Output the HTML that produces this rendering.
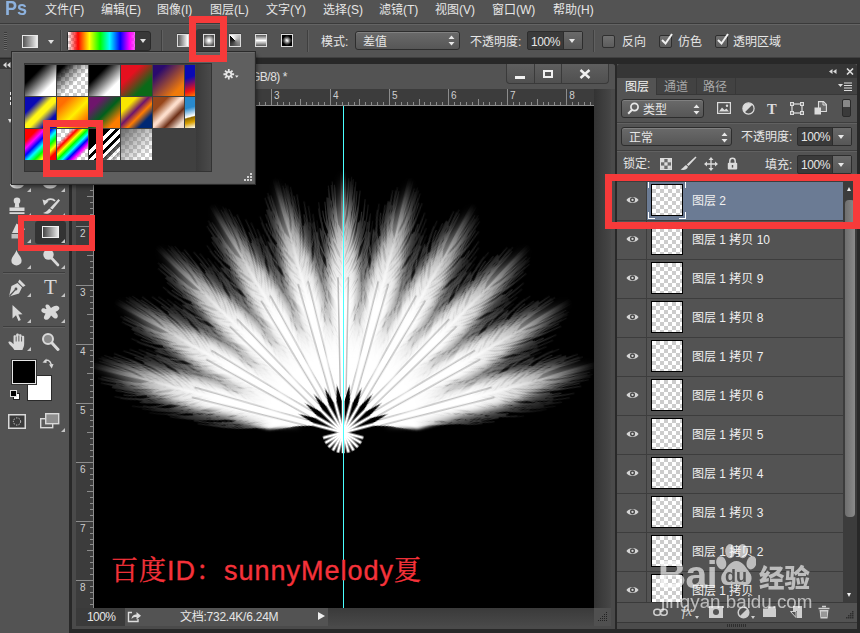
<!DOCTYPE html>
<html lang="zh-CN"><head><meta charset="utf-8"><title>Photoshop</title>
<style>
*{box-sizing:border-box;margin:0;padding:0}
html,body{width:860px;height:633px;overflow:hidden;background:#282828}
body{position:relative;font-family:"Liberation Sans","Noto Sans CJK SC",sans-serif;font-size:12px;color:#e6e6e6;line-height:1}
.a{position:absolute}
.t{position:absolute;white-space:nowrap;line-height:14px;height:14px}
.redbox{position:absolute;border:7px solid #f73a3a;z-index:50}
.dd{position:absolute;border:1px solid #2d2d2d;border-radius:3px;background:linear-gradient(#6a6a6a,#565656);box-shadow:inset 0 1px 0 #808080}
.chk{background-color:#fff;background-image:linear-gradient(45deg,#ccc 25%,transparent 25%,transparent 75%,#ccc 75%),linear-gradient(45deg,#ccc 25%,transparent 25%,transparent 75%,#ccc 75%);background-size:8px 8px;background-position:0 0,4px 4px}
.sw{position:absolute;width:32px;height:32px;overflow:hidden}
.sw i{position:absolute;left:0;top:0;right:0;bottom:0;display:block}
.row{position:absolute;left:617px;width:226px;height:39px;border-top:1px solid #3d3d3d;background:#535353}
.row .th{position:absolute;left:34px;top:2px;width:32px;height:32px;border:1px solid #000}
.row .nm{position:absolute;left:75px;top:12px;line-height:14px;white-space:nowrap;color:#f0f0f0}
.row .ey{position:absolute;left:0;top:0;width:30px;height:38px;border-right:1px solid #3d3d3d}
</style></head>
<body>
<div class="a" style="left:0;top:0;width:860px;height:24px;background:#535353;border-bottom:1px solid #3a3a3a"></div>
<div class="t" style="left:5px;top:-3px;font-size:20.5px;font-weight:bold;color:#8db2de;line-height:22px;height:22px;letter-spacing:0px;transform:scaleX(.88);transform-origin:0 0">Ps</div>
<div class="t" style="left:45px;top:3px">文件(F)</div>
<div class="t" style="left:101px;top:3px">编辑(E)</div>
<div class="t" style="left:157px;top:3px">图像(I)</div>
<div class="t" style="left:210px;top:3px">图层(L)</div>
<div class="t" style="left:266px;top:3px">文字(Y)</div>
<div class="t" style="left:323px;top:3px">选择(S)</div>
<div class="t" style="left:379px;top:3px">滤镜(T)</div>
<div class="t" style="left:435px;top:3px">视图(V)</div>
<div class="t" style="left:492px;top:3px">窗口(W)</div>
<div class="t" style="left:553px;top:3px">帮助(H)</div>
<div class="a" style="left:0;top:24px;width:860px;height:34px;background:#535353;border-top:1px solid #646464;border-bottom:1px solid #404040"></div>
<div class="a" style="left:4px;top:32px;width:3px;height:18px;background:repeating-linear-gradient(#3a3a3a 0 1px,#6a6a6a 1px 2px)"></div>
<div class="a" style="left:22px;top:35px;width:16px;height:13px;border:1px solid #e8e8e8;background:linear-gradient(90deg,#555,#eee)"></div>
<div class="a" style="left:48px;top:40px;border:3px solid transparent;border-top:4px solid #e0e0e0;border-bottom:0"></div>
<div class="a" style="left:60px;top:30px;width:1px;height:22px;background:#3f3f3f;border-right:1px solid #606060;width:2px"></div>
<div class="a" style="left:67px;top:31px;width:84px;height:20px;border:1px solid #2a2a2a;border-radius:3px;background:#383838"></div>
<div class="a chk" style="left:68px;top:32px;width:67px;height:18px;background-size:6px 6px;background-position:0 0,3px 3px"></div>
<div class="a" style="left:68px;top:32px;width:67px;height:18px;background:linear-gradient(90deg,rgba(255,0,0,0) 0%,#f00 15%,#ff0 32%,#0f0 48%,#0ff 62%,#00f 78%,#f0f 92%,rgba(255,0,255,.6) 100%)"></div>
<div class="a" style="left:140px;top:39px;border:3px solid transparent;border-top:4px solid #e0e0e0;border-bottom:0"></div>
<div class="a" style="left:161px;top:30px;width:2px;height:22px;background:#3f3f3f;border-right:1px solid #606060"></div>
<div class="a" style="left:196px;top:29px;width:25px;height:24px;background:#383838;border-radius:3px"></div>
<div class="a" style="left:177px;top:34px;width:12px;height:13px;border:1px solid #dcdcdc;box-shadow:0 -1px 0 #3c3c3c;background:linear-gradient(90deg,#555,#fff)"></div>
<div class="a" style="left:203px;top:34px;width:12px;height:13px;border:1px solid #dcdcdc;box-shadow:0 -1px 0 #3c3c3c;background:radial-gradient(circle,#fff 10%,#555 75%)"></div>
<div class="a" style="left:229px;top:34px;width:12px;height:13px;border:1px solid #dcdcdc;box-shadow:0 -1px 0 #3c3c3c;background:conic-gradient(from 315deg at 50% 50%,#fff,#000)"></div>
<div class="a" style="left:255px;top:34px;width:12px;height:13px;border:1px solid #dcdcdc;box-shadow:0 -1px 0 #3c3c3c;background:linear-gradient(#555,#fff 50%,#555)"></div>
<div class="a" style="left:281px;top:34px;width:12px;height:13px;border:1px solid #dcdcdc;box-shadow:0 -1px 0 #3c3c3c;background:linear-gradient(45deg,#000 20%,transparent 50%,#000 80%),linear-gradient(135deg,#000 20%,#fff 45%,#fff 55%,#000 80%)"></div>
<div class="a" style="left:307px;top:30px;width:2px;height:22px;background:#3f3f3f;border-right:1px solid #606060"></div>
<div class="t" style="left:321px;top:35px">模式:</div>
<div class="dd" style="left:355px;top:31px;width:105px;height:19px"></div>
<div class="t" style="left:363px;top:35px">差值</div>
<svg class="a" style="left:448px;top:35px" width="7" height="11" viewBox="0 0 7 11"><path d="M0.5 4 L3.5 0.5 L6.5 4Z M0.5 7 L3.5 10.5 L6.5 7Z" fill="#e8e8e8"/></svg>
<div class="t" style="left:470px;top:35px">不透明度:</div>
<div class="a" style="left:527px;top:31px;width:56px;height:19px;border:1px solid #2d2d2d;border-radius:2px;background:#3a3a3a"></div>
<div class="a" style="left:563px;top:32px;width:19px;height:17px;background:linear-gradient(#6a6a6a,#565656);border-left:1px solid #2d2d2d"></div>
<div class="a" style="left:569px;top:39px;border:3.5px solid transparent;border-top:4px solid #e8e8e8;border-bottom:0"></div>
<div class="t" style="left:531px;top:35px;letter-spacing:-0.4px">100%</div>
<div class="a" style="left:593px;top:30px;width:2px;height:22px;background:#3f3f3f;border-right:1px solid #606060"></div>
<div class="a" style="left:602px;top:35px;width:13px;height:13px;border:1px solid #2f2f2f;border-radius:2px;background:linear-gradient(#707070,#5c5c5c)"></div>
<div class="t" style="left:622px;top:35px">反向</div>
<div class="a" style="left:659px;top:35px;width:13px;height:13px;border:1px solid #2f2f2f;border-radius:2px;background:linear-gradient(#707070,#5c5c5c)"></div><svg class="a" style="left:660px;top:32px" width="14" height="14" viewBox="0 0 14 14"><path d="M2 8 L5.5 11.5 L12 2" fill="none" stroke="#f0f0f0" stroke-width="2"/></svg>
<div class="t" style="left:678px;top:35px">仿色</div>
<div class="a" style="left:715px;top:35px;width:13px;height:13px;border:1px solid #2f2f2f;border-radius:2px;background:linear-gradient(#707070,#5c5c5c)"></div><svg class="a" style="left:716px;top:32px" width="14" height="14" viewBox="0 0 14 14"><path d="M2 8 L5.5 11.5 L12 2" fill="none" stroke="#f0f0f0" stroke-width="2"/></svg>
<div class="t" style="left:733px;top:35px">透明区域</div>
<div class="a" style="left:0;top:64px;width:69px;height:569px;background:#535353"></div>
<div class="a" style="left:0;top:59px;width:69px;height:10px;background:#363636"></div>
<svg class="a" style="left:3px;top:62px" width="8" height="6" viewBox="0 0 8 6"><path d="M3.5 0V6L0 3ZM7.5 0V6L4 3Z" fill="#d8d8d8"/></svg>
<div class="a" style="left:10px;top:92px;width:1px;height:13px;background:repeating-linear-gradient(#eee 0 3px,transparent 3px 5px)"></div>
<div class="a" style="left:8px;top:119px;border:2px solid transparent;border-top:4px solid #ddd;border-bottom:0"></div>
<div class="a" style="left:35px;top:221px;width:31px;height:23px;background:#333;border-radius:3px"></div>
<div class="a" style="left:3px;top:272px;width:62px;height:1px;background:#3e3e3e;border-bottom:1px solid #606060;height:2px"></div>
<div class="a" style="left:3px;top:326px;width:62px;height:2px;background:#3e3e3e;border-bottom:1px solid #606060"></div>
<svg class="a" style="left:8px;top:184px" width="18" height="6" viewBox="0 0 18 6" preserveAspectRatio="none"><ellipse cx="9" cy="0" rx="7" ry="4.5" fill="#d9d9d9"/></svg>
<svg class="a" style="left:41px;top:184px" width="18" height="6" viewBox="0 0 18 6" preserveAspectRatio="none"><ellipse cx="9" cy="0" rx="7" ry="4.5" fill="#d9d9d9"/></svg>
<div class="a" style="left:27px;top:188px;border:2px solid transparent;border-right-color:#bbb;border-bottom-color:#bbb;border-left:0;border-top:0;width:0;height:0;border-width:0 0 4px 4px;border-style:solid;border-color:transparent transparent #c4c4c4 transparent"></div>
<div class="a" style="left:61px;top:188px;border:2px solid transparent;border-right-color:#bbb;border-bottom-color:#bbb;border-left:0;border-top:0;width:0;height:0;border-width:0 0 4px 4px;border-style:solid;border-color:transparent transparent #c4c4c4 transparent"></div>
<svg class="a" style="left:8px;top:197px" width="18" height="18" viewBox="0 0 18 18" preserveAspectRatio="none"><g fill="#d9d9d9"><circle cx="9" cy="3.8" r="3.3"/><path d="M7.3 5h3.4l0.6 5.5h-4.6z"/><path d="M1.5 10.5h15v3.5h-15z"/><rect x="1.5" y="15.2" width="15" height="1.8"/></g></svg>
<div class="a" style="left:27px;top:213px;border:2px solid transparent;border-right-color:#bbb;border-bottom-color:#bbb;border-left:0;border-top:0;width:0;height:0;border-width:0 0 4px 4px;border-style:solid;border-color:transparent transparent #c4c4c4 transparent"></div>
<svg class="a" style="left:41px;top:196px" width="20" height="20" viewBox="0 0 20 20" preserveAspectRatio="none"><g fill="none" stroke="#d9d9d9"><path d="M4 6.5C7 2 12 2.5 14 5" stroke-width="1.8"/></g><path d="M1.5 3.5L7.5 5.5L3 9.5Z" fill="#d9d9d9"/><path d="M17.5 3L19 4.5L11.5 13.5L9 12Z" fill="#d9d9d9"/><path d="M8.3 12.6L11 14.4C9 18 5 18.5 2 17C5 16.5 6.5 14.5 8.3 12.6Z" fill="#d9d9d9"/></svg>
<div class="a" style="left:61px;top:213px;border:2px solid transparent;border-right-color:#bbb;border-bottom-color:#bbb;border-left:0;border-top:0;width:0;height:0;border-width:0 0 4px 4px;border-style:solid;border-color:transparent transparent #c4c4c4 transparent"></div>
<svg class="a" style="left:7px;top:222px" width="20" height="18" viewBox="0 0 20 18" preserveAspectRatio="none"><path d="M9.5 1.5L18 7L14.5 11H5Z" fill="#d9d9d9"/><path d="M4.5 12H14.5V16.5H4.5Z" fill="#bdbdbd"/></svg>
<div class="a" style="left:27px;top:239px;border:2px solid transparent;border-right-color:#bbb;border-bottom-color:#bbb;border-left:0;border-top:0;width:0;height:0;border-width:0 0 4px 4px;border-style:solid;border-color:transparent transparent #c4c4c4 transparent"></div>
<div class="a" style="left:42px;top:226px;width:17px;height:12px;border:1px solid #f0f0f0;background:linear-gradient(90deg,#444,#e8e8e8)"></div>
<div class="a" style="left:61px;top:239px;border:2px solid transparent;border-right-color:#bbb;border-bottom-color:#bbb;border-left:0;border-top:0;width:0;height:0;border-width:0 0 4px 4px;border-style:solid;border-color:transparent transparent #c4c4c4 transparent"></div>
<svg class="a" style="left:10px;top:249px" width="13" height="17" viewBox="0 0 14 19" preserveAspectRatio="none"><path d="M7 1C8.5 6 12.5 9 12.5 13A5.5 5.5 0 0 1 1.5 13C1.5 9 5.5 6 7 1Z" fill="#d9d9d9"/></svg>
<div class="a" style="left:27px;top:265px;border:2px solid transparent;border-right-color:#bbb;border-bottom-color:#bbb;border-left:0;border-top:0;width:0;height:0;border-width:0 0 4px 4px;border-style:solid;border-color:transparent transparent #c4c4c4 transparent"></div>
<svg class="a" style="left:42px;top:248px" width="18" height="19" viewBox="0 0 18 19" preserveAspectRatio="none"><circle cx="6.5" cy="6.5" r="5.2" fill="#d9d9d9"/><path d="M9.5 10L16 17" stroke="#d9d9d9" stroke-width="2.6" stroke-linecap="round"/></svg>
<div class="a" style="left:61px;top:265px;border:2px solid transparent;border-right-color:#bbb;border-bottom-color:#bbb;border-left:0;border-top:0;width:0;height:0;border-width:0 0 4px 4px;border-style:solid;border-color:transparent transparent #c4c4c4 transparent"></div>
<svg class="a" style="left:7px;top:278px" width="20" height="20" viewBox="0 0 20 20" preserveAspectRatio="none"><path d="M12.5 1.5L18.5 7.5L16 9L11 4Z" fill="#d9d9d9"/><path d="M10.5 5L15 9.5L12 15.5L2 18.5L4.5 8Z" fill="#d9d9d9"/><path d="M2.5 18L8.5 11.5" stroke="#535353" stroke-width="1.2"/><circle cx="9" cy="11" r="1.4" fill="#535353"/></svg>
<div class="a" style="left:27px;top:293px;border:2px solid transparent;border-right-color:#bbb;border-bottom-color:#bbb;border-left:0;border-top:0;width:0;height:0;border-width:0 0 4px 4px;border-style:solid;border-color:transparent transparent #c4c4c4 transparent"></div>
<div class="t" style="left:44px;top:274px;font-family:'Liberation Serif',serif;font-size:21px;line-height:26px;height:26px;color:#d9d9d9">T</div>
<div class="a" style="left:61px;top:293px;border:2px solid transparent;border-right-color:#bbb;border-bottom-color:#bbb;border-left:0;border-top:0;width:0;height:0;border-width:0 0 4px 4px;border-style:solid;border-color:transparent transparent #c4c4c4 transparent"></div>
<svg class="a" style="left:11px;top:304px" width="12" height="18" viewBox="0 0 12 18" preserveAspectRatio="none"><path d="M1.5 1L1.5 14.5L5 11.2L7.5 17L9.8 16L7.3 10.4L11.5 10.2Z" fill="#d9d9d9"/></svg>
<div class="a" style="left:27px;top:319px;border:2px solid transparent;border-right-color:#bbb;border-bottom-color:#bbb;border-left:0;border-top:0;width:0;height:0;border-width:0 0 4px 4px;border-style:solid;border-color:transparent transparent #c4c4c4 transparent"></div>
<svg class="a" style="left:40px;top:303px" width="21" height="19" viewBox="0 0 21 19" preserveAspectRatio="none"><path d="M6.5 1.5C9 1 10 3.5 11 5C13 3 17 1.5 19 4C20.5 6.5 17 8 15.5 9C17 10.5 19 13 17 15C14.5 17 12.5 13.5 11 12.5C10 14.5 8 18 5 16.5C2.5 15 5 12 5.5 10.5C3.5 10 0.5 9 1.5 6.5C2.5 4 5.5 6 6.5 6C6 4.5 4.5 2.5 6.5 1.5Z" fill="#d9d9d9"/></svg>
<div class="a" style="left:61px;top:319px;border:2px solid transparent;border-right-color:#bbb;border-bottom-color:#bbb;border-left:0;border-top:0;width:0;height:0;border-width:0 0 4px 4px;border-style:solid;border-color:transparent transparent #c4c4c4 transparent"></div>
<svg class="a" style="left:7px;top:332px" width="21" height="20" viewBox="0 0 17 20" preserveAspectRatio="none"><path d="M6 18C4.5 15 2 13 1.2 10.8C0.8 9.5 2.5 9 3.6 10.2L5.3 12.2V4.2C5.3 2.8 7.4 2.8 7.4 4.2V2.6C7.4 1.1 9.6 1.1 9.6 2.6V3.2C9.6 1.9 11.8 1.9 11.8 3.2V4.6C11.8 3.4 13.9 3.4 13.9 4.8V12C13.9 14.5 13 16 12.5 18Z" fill="#d9d9d9"/><path d="M7.4 4.5V9.5M9.6 3.5V9.5M11.8 4.6V9.5" stroke="#535353" stroke-width=".8"/></svg>
<div class="a" style="left:27px;top:347px;border:2px solid transparent;border-right-color:#bbb;border-bottom-color:#bbb;border-left:0;border-top:0;width:0;height:0;border-width:0 0 4px 4px;border-style:solid;border-color:transparent transparent #c4c4c4 transparent"></div>
<svg class="a" style="left:41px;top:332px" width="19" height="20" viewBox="0 0 19 20" preserveAspectRatio="none"><circle cx="7" cy="7" r="5" fill="#8a8a8a" stroke="#d9d9d9" stroke-width="2"/><path d="M11 11L17 17.5" stroke="#d9d9d9" stroke-width="3" stroke-linecap="round"/></svg>
<div class="a" style="left:27px;top:375px;width:25px;height:26px;background:#fff;border:1px solid #2a2a2a"></div>
<div class="a" style="left:12px;top:360px;width:24px;height:24px;background:#000;border:1px solid #e8e8e8;box-shadow:0 0 0 1px #333"></div>
<svg class="a" style="left:42px;top:357px" width="12" height="12" viewBox="0 0 12 12" preserveAspectRatio="none"><path d="M2.5 4.5C5 2 8 3 9.5 8" fill="none" stroke="#d9d9d9" stroke-width="1.4"/><path d="M0.5 5.5L4.5 1.5L4.5 6Z" fill="#d9d9d9"/><path d="M7 7.5L11.5 7L9.8 11.5Z" fill="#d9d9d9"/></svg>
<div class="a" style="left:13px;top:393px;width:7px;height:7px;background:#fff;border:1px solid #222"></div>
<div class="a" style="left:10px;top:390px;width:7px;height:7px;background:#000;border:1px solid #ddd"></div>
<svg class="a" style="left:8px;top:414px" width="18" height="15" viewBox="0 0 18 15" preserveAspectRatio="none"><rect x="0.75" y="0.75" width="16.5" height="13.5" fill="#3a3a3a" stroke="#d9d9d9" stroke-width="1.5"/><circle cx="9" cy="7.5" r="3.6" fill="none" stroke="#d9d9d9" stroke-width="1" stroke-dasharray="1.3 1.3"/></svg>
<svg class="a" style="left:40px;top:413px" width="22" height="17" viewBox="0 0 22 17" preserveAspectRatio="none"><rect x="0.7" y="5.7" width="12" height="9" fill="#5c5c5c" stroke="#d9d9d9" stroke-width="1.4"/><rect x="5.7" y="0.7" width="13" height="10" fill="#8e8e8e" stroke="#d9d9d9" stroke-width="1.4"/></svg>
<div class="a" style="left:61px;top:428px;border:2px solid transparent;border-right-color:#bbb;border-bottom-color:#bbb;border-left:0;border-top:0;width:0;height:0;border-width:0 0 4px 4px;border-style:solid;border-color:transparent transparent #c4c4c4 transparent"></div>
<div class="a" style="left:72px;top:64px;width:543px;height:565px;background:#4a4a4a;border-radius:3px 3px 0 0"></div>
<div class="a" style="left:72px;top:64px;width:543px;height:25px;background:#535353;border-radius:3px 3px 0 0"></div>
<div class="t" style="left:251px;top:70px;color:#e0e0e0;letter-spacing:-0.5px">GB/8) *</div>
<div class="a" style="left:506px;top:64px;width:103px;height:20px;border:1px solid #3a3a3a;border-top:0;border-radius:0 0 4px 4px;background:linear-gradient(#5f5f5f,#505050)"></div>
<div class="a" style="left:534px;top:64px;width:1px;height:19px;background:#3a3a3a"></div>
<div class="a" style="left:561px;top:64px;width:1px;height:19px;background:#3a3a3a"></div>
<div class="a" style="left:515px;top:76px;width:10px;height:3px;background:#f0f0f0"></div>
<div class="a" style="left:543px;top:70px;width:10px;height:8px;border:2px solid #f0f0f0"></div>
<svg class="a" style="left:579px;top:69px" width="12" height="10" viewBox="0 0 12 10"><path d="M1.5 1 L10.5 9 M10.5 1 L1.5 9" stroke="#f0f0f0" stroke-width="2.4" fill="none"/></svg>
<div class="a" style="left:76px;top:89px;width:518px;height:17px;background:#3c3c3c"></div>
<div class="a" style="left:76px;top:106px;width:18px;height:502px;background:#3c3c3c"></div>
<svg class="a" style="left:76px;top:89px" width="518" height="17" viewBox="76 89 518 17" shape-rendering="crispEdges">
<path d="M82.5 102V106M88.5 102V106M94.5 89V106M100.5 102V106M106.5 102V106M111.5 102V106M117.5 102V106M123.5 99V106M129.5 102V106M135.5 102V106M141.5 102V106M147.5 102V106M153.5 89V106M159.5 102V106M165.5 102V106M170.5 102V106M176.5 102V106M182.5 99V106M188.5 102V106M194.5 102V106M200.5 102V106M206.5 102V106M212.5 89V106M218.5 102V106M224.5 102V106M230.5 102V106M235.5 102V106M241.5 99V106M247.5 102V106M253.5 102V106M259.5 102V106M265.5 102V106M271.5 89V106M277.5 102V106M283.5 102V106M289.5 102V106M295.5 102V106M300.5 99V106M306.5 102V106M312.5 102V106M318.5 102V106M324.5 102V106M330.5 89V106M336.5 102V106M342.5 102V106M348.5 102V106M354.5 102V106M359.5 99V106M365.5 102V106M371.5 102V106M377.5 102V106M383.5 102V106M389.5 89V106M395.5 102V106M401.5 102V106M407.5 102V106M413.5 102V106M419.5 99V106M424.5 102V106M430.5 102V106M436.5 102V106M442.5 102V106M448.5 89V106M454.5 102V106M460.5 102V106M466.5 102V106M472.5 102V106M478.5 99V106M483.5 102V106M489.5 102V106M495.5 102V106M501.5 102V106M507.5 89V106M513.5 102V106M519.5 102V106M525.5 102V106M531.5 102V106M537.5 99V106M543.5 102V106M548.5 102V106M554.5 102V106M560.5 102V106M566.5 89V106M572.5 102V106M578.5 102V106M584.5 102V106M590.5 102V106" stroke="#8c8c8c" stroke-width="1" fill="none"/>
<path d="M76 105.5H594" stroke="#8c8c8c" stroke-width="1"/>
<text x="96.7" y="99" font-size="10" fill="#cfcfcf" font-family="Liberation Sans,sans-serif" style="shape-rendering:auto">0</text>
<text x="155.8" y="99" font-size="10" fill="#cfcfcf" font-family="Liberation Sans,sans-serif" style="shape-rendering:auto">1</text>
<text x="214.8" y="99" font-size="10" fill="#cfcfcf" font-family="Liberation Sans,sans-serif" style="shape-rendering:auto">2</text>
<text x="273.9" y="99" font-size="10" fill="#cfcfcf" font-family="Liberation Sans,sans-serif" style="shape-rendering:auto">3</text>
<text x="332.9" y="99" font-size="10" fill="#cfcfcf" font-family="Liberation Sans,sans-serif" style="shape-rendering:auto">4</text>
<text x="392.0" y="99" font-size="10" fill="#cfcfcf" font-family="Liberation Sans,sans-serif" style="shape-rendering:auto">5</text>
<text x="451.1" y="99" font-size="10" fill="#cfcfcf" font-family="Liberation Sans,sans-serif" style="shape-rendering:auto">6</text>
<text x="510.1" y="99" font-size="10" fill="#cfcfcf" font-family="Liberation Sans,sans-serif" style="shape-rendering:auto">7</text>
<text x="569.2" y="99" font-size="10" fill="#cfcfcf" font-family="Liberation Sans,sans-serif" style="shape-rendering:auto">8</text>
</svg>
<svg class="a" style="left:76px;top:106px" width="18" height="502" viewBox="76 106 18 502" shape-rendering="crispEdges">
<path d="M76 107.5H94M90 113.5H94M90 119.5H94M90 125.5H94M90 131.5H94M87 137.5H94M90 143.5H94M90 149.5H94M90 155.5H94M90 161.5H94M76 166.5H94M90 172.5H94M90 178.5H94M90 184.5H94M90 190.5H94M87 196.5H94M90 202.5H94M90 208.5H94M90 214.5H94M90 220.5H94M76 226.5H94M90 231.5H94M90 237.5H94M90 243.5H94M90 249.5H94M87 255.5H94M90 261.5H94M90 267.5H94M90 273.5H94M90 279.5H94M76 285.5H94M90 290.5H94M90 296.5H94M90 302.5H94M90 308.5H94M87 314.5H94M90 320.5H94M90 326.5H94M90 332.5H94M90 338.5H94M76 344.5H94M90 350.5H94M90 355.5H94M90 361.5H94M90 367.5H94M87 373.5H94M90 379.5H94M90 385.5H94M90 391.5H94M90 397.5H94M76 403.5H94M90 409.5H94M90 415.5H94M90 420.5H94M90 426.5H94M87 432.5H94M90 438.5H94M90 444.5H94M90 450.5H94M90 456.5H94M76 462.5H94M90 468.5H94M90 474.5H94M90 479.5H94M90 485.5H94M87 491.5H94M90 497.5H94M90 503.5H94M90 509.5H94M90 515.5H94M76 521.5H94M90 527.5H94M90 533.5H94M90 539.5H94M90 544.5H94M87 550.5H94M90 556.5H94M90 562.5H94M90 568.5H94M90 574.5H94M76 580.5H94M90 586.5H94M90 592.5H94M90 598.5H94M90 604.5H94" stroke="#8c8c8c" stroke-width="1" fill="none"/>
<path d="M93.5 106V608" stroke="#8c8c8c" stroke-width="1"/>
<text x="80" y="118.4" font-size="10" fill="#cfcfcf" font-family="Liberation Sans,sans-serif">0</text>
<text x="80" y="177.5" font-size="10" fill="#cfcfcf" font-family="Liberation Sans,sans-serif">1</text>
<text x="80" y="236.5" font-size="10" fill="#cfcfcf" font-family="Liberation Sans,sans-serif">2</text>
<text x="80" y="295.6" font-size="10" fill="#cfcfcf" font-family="Liberation Sans,sans-serif">3</text>
<text x="80" y="354.6" font-size="10" fill="#cfcfcf" font-family="Liberation Sans,sans-serif">4</text>
<text x="80" y="413.7" font-size="10" fill="#cfcfcf" font-family="Liberation Sans,sans-serif">5</text>
<text x="80" y="472.8" font-size="10" fill="#cfcfcf" font-family="Liberation Sans,sans-serif">6</text>
<text x="80" y="531.8" font-size="10" fill="#cfcfcf" font-family="Liberation Sans,sans-serif">7</text>
<text x="80" y="590.9" font-size="10" fill="#cfcfcf" font-family="Liberation Sans,sans-serif">8</text>
</svg>
<div class="a" style="left:594px;top:89px;width:17px;height:519px;background:linear-gradient(90deg,#333,#474747)"></div>
<div class="a" style="left:94px;top:106px;width:500px;height:502px;background:#000;overflow:hidden"><svg class="a" style="left:0;top:0" width="500" height="502" viewBox="0 0 500 502">
<defs>
<filter id="b4" filterUnits="userSpaceOnUse" x="-80" y="-290" width="160" height="340"><feGaussianBlur stdDeviation="3.6"/></filter>
<filter id="b2" filterUnits="userSpaceOnUse" x="-80" y="-290" width="160" height="340"><feGaussianBlur stdDeviation="1.6"/></filter>
<filter id="b1" filterUnits="userSpaceOnUse" x="-80" y="-290" width="160" height="340"><feGaussianBlur stdDeviation="0.6"/></filter>
<linearGradient id="fg" x1="0" y1="0" x2="0" y2="-255" gradientUnits="userSpaceOnUse"><stop offset="0" stop-color="#fff" stop-opacity="1"/><stop offset="0.5" stop-color="#fff" stop-opacity="1"/><stop offset="0.68" stop-color="#fff" stop-opacity="0.75"/><stop offset="0.85" stop-color="#fff" stop-opacity="0.33"/><stop offset="0.99" stop-color="#fff" stop-opacity="0"/></linearGradient>
<linearGradient id="fb0" x1="0" y1="0" x2="0" y2="-67" gradientUnits="userSpaceOnUse"><stop offset="0" stop-color="#fff" stop-opacity="1"/><stop offset="0.75" stop-color="#fff" stop-opacity="1"/><stop offset="1" stop-color="#fff" stop-opacity="0"/></linearGradient>
<linearGradient id="fb" x1="0" y1="0" x2="0" y2="-115" gradientUnits="userSpaceOnUse"><stop offset="0" stop-color="#fff" stop-opacity="1"/><stop offset="0.6" stop-color="#fff" stop-opacity="1"/><stop offset="1" stop-color="#fff" stop-opacity="0"/></linearGradient>
<linearGradient id="bg2" x1="0" y1="0" x2="0" y2="-255" gradientUnits="userSpaceOnUse"><stop offset="0" stop-color="#fff" stop-opacity="0.75"/><stop offset="0.6" stop-color="#fff" stop-opacity="0.62"/><stop offset="0.82" stop-color="#fff" stop-opacity="0.34"/><stop offset="1" stop-color="#fff" stop-opacity="0"/></linearGradient>
<linearGradient id="sg" x1="0" y1="20" x2="0" y2="-215" gradientUnits="userSpaceOnUse"><stop offset="0" stop-color="#fff" stop-opacity="1"/><stop offset="0.5" stop-color="#fff" stop-opacity="1"/><stop offset="1" stop-color="#fff" stop-opacity="0"/></linearGradient>
<linearGradient id="mg" x1="-34" y1="0" x2="34" y2="0" gradientUnits="userSpaceOnUse"><stop offset="0" stop-color="#fff" stop-opacity="0"/><stop offset="0.16" stop-color="#fff" stop-opacity="0.36"/><stop offset="0.36" stop-color="#fff" stop-opacity="0.82"/><stop offset="0.5" stop-color="#fff" stop-opacity="1"/><stop offset="0.64" stop-color="#fff" stop-opacity="0.82"/><stop offset="0.84" stop-color="#fff" stop-opacity="0.36"/><stop offset="1" stop-color="#fff" stop-opacity="0"/></linearGradient>
<mask id="mk" maskUnits="userSpaceOnUse" x="-40" y="-270" width="80" height="300"><rect x="-40" y="-270" width="80" height="300" fill="url(#mg)"/></mask>
<g id="f" transform="scale(1 1.035)">
<path d="M0 -45 L3.6 -45 L4.4 -48 L5.2 -51 L6.0 -54 L6.8 -57 L7.5 -60 L7.8 -63 L8.1 -66 L8.4 -69 L8.7 -72 L9.0 -75 L9.3 -78 L9.6 -81 L9.9 -84 L10.1 -87 L10.4 -90 L10.7 -93 L11.0 -96 L11.3 -99 L11.6 -102 L11.9 -105 L12.2 -108 L12.5 -111 L12.8 -114 L13.0 -117 L13.3 -120 L13.6 -123 L13.9 -126 L14.2 -129 L14.4 -132 L14.4 -135 L14.5 -138 L14.6 -141 L14.7 -144 L14.7 -147 L14.8 -150 L14.8 -153 L14.7 -156 L14.5 -159 L14.4 -162 L14.2 -165 L14.0 -168 L13.7 -171 L13.4 -174 L13.2 -177 L12.9 -180 L12.5 -183 L12.2 -186 L11.8 -189 L11.5 -192 L11.1 -195 L10.6 -198 L10.2 -201 L9.8 -204 L9.3 -207 L8.9 -210 L8.4 -213 L7.9 -216 L7.4 -219 L6.8 -222 L6.3 -225 L5.7 -228 L5.2 -231 L4.6 -234 L4.0 -237 L3.4 -240 L2.8 -243 L2.2 -246 L1.5 -249 L0.9 -252 L0.2 -255 L-0.2 -255 L-0.9 -252 L-1.5 -249 L-2.2 -246 L-2.8 -243 L-3.4 -240 L-4.0 -237 L-4.6 -234 L-5.2 -231 L-5.7 -228 L-6.3 -225 L-6.8 -222 L-7.4 -219 L-7.9 -216 L-8.4 -213 L-8.9 -210 L-9.3 -207 L-9.8 -204 L-10.2 -201 L-10.6 -198 L-11.1 -195 L-11.5 -192 L-11.8 -189 L-12.2 -186 L-12.5 -183 L-12.9 -180 L-13.2 -177 L-13.4 -174 L-13.7 -171 L-14.0 -168 L-14.2 -165 L-14.4 -162 L-14.5 -159 L-14.7 -156 L-14.8 -153 L-14.8 -150 L-14.7 -147 L-14.7 -144 L-14.6 -141 L-14.5 -138 L-14.4 -135 L-14.4 -132 L-14.2 -129 L-13.9 -126 L-13.6 -123 L-13.3 -120 L-13.0 -117 L-12.8 -114 L-12.5 -111 L-12.2 -108 L-11.9 -105 L-11.6 -102 L-11.3 -99 L-11.0 -96 L-10.7 -93 L-10.4 -90 L-10.1 -87 L-9.9 -84 L-9.6 -81 L-9.3 -78 L-9.0 -75 L-8.7 -72 L-8.4 -69 L-8.1 -66 L-7.8 -63 L-7.5 -60 L-6.8 -57 L-6.0 -54 L-5.2 -51 L-4.4 -48 L-3.6 -45Z" fill="url(#fg)" filter="url(#b4)"/>
<g mask="url(#mk)"><path d="M0 -40C-9.6 -57.4 -16.0 -77.8 -17.4 -98.1M0 -40C10.4 -63.1 17.4 -90.0 19.0 -117.0M0 -42C-10.1 -60.1 -16.9 -81.2 -18.4 -102.3M0 -42C8.6 -56.2 14.3 -72.8 15.6 -89.4M0 -44C-12.2 -63.6 -20.4 -86.4 -22.1 -109.2M0 -44C7.2 -57.1 12.1 -72.4 13.1 -87.8M0 -46C-10.4 -59.1 -17.4 -74.4 -18.9 -89.6M0 -46C7.0 -66.3 11.8 -90.0 12.8 -113.7M0 -48C-15.3 -71.8 -25.6 -99.5 -27.8 -127.3M0 -48C11.3 -67.8 18.9 -91.0 20.6 -114.2M0 -50C-5.9 -63.9 -9.9 -80.1 -10.8 -96.3M0 -50C7.0 -68.3 11.8 -89.7 12.8 -111.1M0 -52C-7.6 -66.3 -12.7 -82.9 -13.8 -99.6M0 -52C8.6 -64.4 14.4 -78.8 15.6 -93.2M0 -54C-12.8 -71.3 -21.3 -91.5 -23.2 -111.6M0 -54C11.6 -72.2 19.3 -93.5 21.0 -114.8M0 -56C-11.8 -74.0 -19.8 -95.0 -21.5 -116.0M0 -56C8.8 -73.5 14.8 -93.9 16.1 -114.3M0 -58C-16.1 -82.0 -26.9 -109.9 -29.2 -137.9M0 -58C13.5 -80.1 22.6 -105.8 24.5 -131.6M0 -60C-8.4 -75.8 -14.0 -94.2 -15.2 -112.6M0 -60C7.1 -75.5 11.9 -93.5 13.0 -111.6M0 -62C-10.9 -83.2 -18.3 -107.9 -19.9 -132.7M0 -62C10.9 -84.2 18.2 -110.0 19.8 -135.9M0 -64C-14.9 -87.5 -25.0 -114.9 -27.2 -142.3M0 -64C7.7 -76.0 12.8 -90.0 14.0 -104.0M0 -66C-11.7 -88.9 -19.6 -115.7 -21.3 -142.4M0 -66C11.2 -89.8 18.7 -117.5 20.3 -145.2M0 -68C-11.1 -80.9 -18.7 -95.9 -20.3 -110.9M0 -68C10.0 -89.3 16.7 -114.2 18.1 -139.1M0 -70C-9.2 -83.0 -15.4 -98.3 -16.7 -113.5M0 -70C14.3 -93.6 24.0 -121.1 26.1 -148.6M0 -72C-8.8 -85.4 -14.6 -101.1 -15.9 -116.7M0 -72C7.3 -85.2 12.2 -100.6 13.3 -116.0M0 -74C-9.3 -95.6 -15.6 -120.7 -16.9 -145.9M0 -74C11.4 -92.7 19.1 -114.5 20.8 -136.4M0 -76C-13.1 -90.3 -21.9 -107.0 -23.8 -123.6M0 -76C12.2 -89.6 20.3 -105.4 22.1 -121.2M0 -78C-10.5 -91.4 -17.6 -107.0 -19.1 -122.7M0 -78C9.6 -92.6 16.0 -109.5 17.4 -126.5M0 -80C-15.0 -103.7 -25.1 -131.2 -27.3 -158.8M0 -80C15.0 -95.6 25.1 -113.9 27.2 -132.2M0 -82C-10.9 -96.5 -18.2 -113.5 -19.7 -130.4M0 -82C13.5 -104.3 22.6 -130.2 24.6 -156.2M0 -84C-15.0 -97.2 -25.1 -112.6 -27.3 -128.0M0 -84C9.8 -98.6 16.3 -115.5 17.7 -132.5M0 -86C-10.8 -107.3 -18.1 -132.1 -19.6 -156.9M0 -86C8.3 -101.6 13.9 -119.7 15.1 -137.9M0 -88C-12.4 -101.1 -20.8 -116.3 -22.6 -131.6M0 -88C12.7 -102.9 21.3 -120.3 23.2 -137.7M0 -90C-11.6 -106.5 -19.5 -125.7 -21.2 -144.9M0 -90C12.4 -113.5 20.7 -140.9 22.5 -168.4M0 -92C-15.4 -110.9 -25.8 -132.9 -28.1 -155.0M0 -92C9.0 -106.2 15.0 -122.8 16.4 -139.3M0 -94C-15.4 -116.9 -25.8 -143.6 -28.0 -170.3M0 -94C9.4 -109.0 15.7 -126.5 17.0 -144.0M0 -96C-16.4 -116.9 -27.4 -141.2 -29.8 -165.6M0 -96C15.9 -110.4 26.5 -127.1 28.8 -143.9M0 -98C-13.6 -120.6 -22.7 -146.9 -24.7 -173.3M0 -98C8.8 -115.1 14.7 -135.0 16.0 -154.9M0 -100C-14.2 -112.5 -23.7 -127.0 -25.8 -141.5M0 -100C13.9 -114.9 23.3 -132.2 25.3 -149.5M0 -102C-15.0 -117.1 -25.1 -134.7 -27.3 -152.3M0 -102C10.7 -121.2 17.8 -143.5 19.4 -165.9M0 -104C-14.1 -118.1 -23.5 -134.6 -25.6 -151.0M0 -104C9.8 -116.8 16.3 -131.8 17.7 -146.8M0 -106C-15.7 -124.7 -26.2 -146.5 -28.5 -168.4M0 -106C10.6 -125.4 17.8 -148.0 19.3 -170.6M0 -108C-10.2 -131.0 -17.0 -157.9 -18.5 -184.7M0 -108C10.1 -120.2 17.0 -134.4 18.4 -148.7M0 -110C-8.6 -127.3 -14.4 -147.6 -15.7 -167.8M0 -110C11.2 -124.1 18.7 -140.6 20.3 -157.1M0 -112C-9.4 -130.9 -15.7 -152.9 -17.0 -174.9M0 -112C16.0 -128.3 26.7 -147.4 29.0 -166.5M0 -114C-14.4 -137.8 -24.1 -165.5 -26.2 -193.2M0 -114C13.6 -134.3 22.7 -158.0 24.7 -181.6M0 -116C-8.3 -129.7 -13.9 -145.6 -15.1 -161.6M0 -116C13.9 -128.2 23.2 -142.5 25.2 -156.7M0 -118C-17.2 -138.4 -28.7 -162.2 -31.2 -186.0M0 -118C13.5 -130.3 22.6 -144.6 24.6 -158.9M0 -120C-14.9 -137.8 -24.9 -158.5 -27.0 -179.3M0 -120C17.1 -135.8 28.6 -154.3 31.1 -172.8M0 -122C-12.9 -134.9 -21.5 -150.0 -23.4 -165.0M0 -122C16.7 -142.8 27.9 -167.2 30.3 -191.5M0 -124C-14.9 -144.8 -24.9 -169.2 -27.0 -193.5M0 -124C16.8 -145.5 28.0 -170.6 30.5 -195.7M0 -126C-14.5 -142.2 -24.2 -161.1 -26.3 -180.1M0 -126C16.0 -148.8 26.8 -175.4 29.2 -202.0M0 -128C-15.5 -145.0 -26.0 -164.8 -28.3 -184.7M0 -128C13.3 -150.4 22.3 -176.5 24.2 -202.5M0 -130C-11.9 -149.5 -19.9 -172.2 -21.6 -195.0M0 -130C14.0 -149.0 23.4 -171.1 25.4 -193.3M0 -132C-13.9 -145.0 -23.3 -160.1 -25.3 -175.2M0 -132C15.1 -155.9 25.2 -183.8 27.4 -211.7M0 -134C-11.6 -154.7 -19.5 -178.9 -21.1 -203.1M0 -134C13.3 -154.8 22.3 -179.1 24.2 -203.4M0 -136C-16.1 -153.3 -26.9 -173.5 -29.3 -193.6M0 -136C14.8 -149.0 24.7 -164.2 26.9 -179.4M0 -138C-13.7 -150.4 -22.9 -164.8 -24.9 -179.2M0 -138C10.4 -155.8 17.4 -176.5 19.0 -197.2M0 -140C-12.2 -160.4 -20.5 -184.2 -22.2 -207.9M0 -140C16.3 -159.4 27.2 -182.0 29.6 -204.6M0 -142C-8.5 -157.1 -14.2 -174.7 -15.4 -192.2M0 -142C14.6 -157.6 24.4 -175.8 26.6 -194.0M0 -144C-9.9 -158.4 -16.6 -175.3 -18.1 -192.1M0 -144C11.9 -166.9 19.9 -193.5 21.6 -220.2M0 -146C-16.1 -163.3 -26.9 -183.5 -29.3 -203.7M0 -146C14.3 -161.9 24.0 -180.5 26.1 -199.1M0 -148C-12.3 -162.4 -20.6 -179.2 -22.4 -195.9M0 -148C13.8 -169.7 23.1 -195.0 25.1 -220.2M0 -150C-8.9 -172.6 -15.0 -198.9 -16.3 -225.2M0 -150C10.2 -169.0 17.0 -191.2 18.5 -213.3M0 -152C-12.9 -165.6 -21.5 -181.5 -23.4 -197.4M0 -152C12.1 -174.0 20.2 -199.8 22.0 -225.5M0 -154C-13.6 -174.5 -22.7 -198.5 -24.6 -222.4M0 -154C9.6 -169.3 16.0 -187.2 17.4 -205.1M0 -156C-9.7 -173.4 -16.3 -193.7 -17.7 -214.0M0 -156C11.8 -170.6 19.7 -187.6 21.4 -204.6M0 -158C-10.1 -177.5 -16.9 -200.3 -18.4 -223.0M0 -158C14.9 -173.8 24.9 -192.2 27.1 -210.6M0 -160C-6.0 -183.8 -10.0 -211.5 -10.8 -239.3M0 -160C8.4 -172.9 14.1 -187.9 15.3 -203.0M0 -162C-4.6 -184.5 -7.7 -210.7 -8.4 -236.9M0 -162C9.0 -182.5 15.1 -206.4 16.4 -230.3M0 -164C-13.6 -179.7 -22.8 -198.0 -24.7 -216.4M0 -164C9.3 -176.2 15.5 -190.5 16.9 -204.8M0 -166C-6.6 -183.5 -11.0 -203.8 -12.0 -224.2M0 -166C5.0 -188.0 8.4 -213.6 9.2 -239.2M0 -168C-7.9 -181.7 -13.2 -197.7 -14.4 -213.6M0 -168C7.6 -187.6 12.7 -210.4 13.8 -233.2M0 -170C-8.2 -189.6 -13.6 -212.4 -14.8 -235.2M0 -170C6.9 -191.7 11.5 -217.0 12.6 -242.3M0 -172C-4.8 -192.2 -8.1 -215.8 -8.8 -239.4M0 -172C6.5 -189.7 10.9 -210.4 11.8 -231.0M0 -174C-11.3 -186.1 -18.9 -200.3 -20.6 -214.4M0 -174C4.0 -194.6 6.6 -218.6 7.2 -242.6M0 -176C-8.4 -191.3 -14.0 -209.1 -15.2 -226.9M0 -176C4.7 -196.4 7.9 -220.1 8.6 -243.9M0 -178C-6.0 -197.4 -10.1 -220.0 -11.0 -242.6M0 -178C9.3 -194.7 15.6 -214.2 17.0 -233.7M0 -180C-0.0 -202.8 -0.0 -229.4 -0.0 -256.0M0 -180C0.0 -202.8 0.0 -229.4 0.0 -256.0M0 -182C-9.0 -195.6 -15.1 -211.4 -16.4 -227.2M0 -182C4.6 -201.5 7.7 -224.3 8.4 -247.0M0 -184C-6.5 -200.5 -10.9 -219.8 -11.9 -239.1M0 -184C0.0 -205.6 0.0 -230.8 0.0 -256.0M0 -186C-0.0 -207.0 -0.0 -231.5 -0.0 -256.0M0 -186C1.3 -205.8 2.2 -228.9 2.4 -252.1M0 -188C-0.0 -208.4 -0.0 -232.2 -0.0 -256.0M0 -188C1.1 -207.7 1.9 -230.7 2.1 -253.7M0 -190C-8.2 -204.6 -13.7 -221.5 -14.9 -238.5M0 -190C0.0 -209.8 0.0 -232.9 0.0 -256.0M0 -192C-1.3 -210.4 -2.2 -232.0 -2.3 -253.5M0 -192C5.6 -207.8 9.4 -226.3 10.2 -244.8M0 -194C-0.0 -212.6 -0.0 -234.3 -0.0 -256.0M0 -194C6.5 -207.0 10.8 -222.2 11.8 -237.3M0 -196C-0.0 -214.0 -0.0 -235.0 -0.0 -256.0M0 -196C0.1 -213.8 0.2 -234.7 0.3 -255.5M0 -198C-0.0 -215.4 -0.0 -235.7 -0.0 -256.0M0 -198C0.0 -215.4 0.0 -235.7 0.0 -256.0M0 -200C-1.3 -216.0 -2.2 -234.7 -2.4 -253.4M0 -200C3.1 -213.7 5.1 -229.7 5.6 -245.6M0 -202C-0.0 -218.2 -0.0 -237.1 -0.0 -256.0M0 -202C0.0 -218.2 0.0 -237.1 0.0 -256.0M0 -204C-0.0 -219.6 -0.0 -237.8 -0.0 -256.0M0 -204C0.0 -219.6 0.0 -237.8 0.0 -256.0M0 -206C-0.5 -220.7 -0.8 -237.8 -0.9 -254.9M0 -206C0.0 -221.0 0.0 -238.5 0.0 -256.0M0 -208C-0.0 -222.4 -0.0 -239.2 -0.0 -256.0M0 -208C0.0 -222.4 0.0 -239.2 0.0 -256.0M0 -210C-0.0 -223.8 -0.0 -239.9 -0.0 -256.0M0 -210C0.0 -223.8 0.0 -239.9 0.0 -256.0M0 -212C-0.0 -225.2 -0.0 -240.6 -0.0 -256.0M0 -212C0.0 -225.2 0.0 -240.6 0.0 -256.0M0 -214C-0.0 -226.6 -0.0 -241.3 -0.0 -256.0M0 -214C0.0 -226.6 0.0 -241.3 0.0 -256.0M0 -216C-0.0 -228.0 -0.0 -242.0 -0.0 -256.0M0 -216C0.0 -228.0 0.0 -242.0 0.0 -256.0M0 -218C-0.0 -229.4 -0.0 -242.7 -0.0 -256.0M0 -218C0.0 -229.4 0.0 -242.7 0.0 -256.0M0 -220C-0.0 -230.8 -0.0 -243.4 -0.0 -256.0M0 -220C0.0 -230.8 0.0 -243.4 0.0 -256.0M0 -222C-0.0 -232.2 -0.0 -244.1 -0.0 -256.0M0 -222C0.0 -232.2 0.0 -244.1 0.0 -256.0M0 -224C-0.0 -233.6 -0.0 -244.8 -0.0 -256.0M0 -224C0.0 -233.6 0.0 -244.8 0.0 -256.0M0 -226C-0.0 -235.0 -0.0 -245.5 -0.0 -256.0M0 -226C0.0 -235.0 0.0 -245.5 0.0 -256.0M0 -228C-0.0 -236.4 -0.0 -246.2 -0.0 -256.0M0 -228C0.0 -236.4 0.0 -246.2 0.0 -256.0M0 -230C-0.0 -237.8 -0.0 -246.9 -0.0 -256.0M0 -230C0.0 -237.8 0.0 -246.9 0.0 -256.0M0 -232C-0.0 -239.2 -0.0 -247.6 -0.0 -256.0M0 -232C0.0 -239.2 0.0 -247.6 0.0 -256.0M0 -234C-0.0 -240.6 -0.0 -248.3 -0.0 -256.0M0 -234C0.0 -240.6 0.0 -248.3 0.0 -256.0M0 -236C-0.0 -242.0 -0.0 -249.0 -0.0 -256.0M0 -236C0.0 -242.0 0.0 -249.0 0.0 -256.0" fill="none" stroke="url(#bg2)" stroke-width="1.2" filter="url(#b1)"/></g>
<path d="M0 -50 L7.1 -50 L8.4 -53 L9.8 -56 L11.1 -59 L12.5 -62 L13.8 -65 L15.2 -68 L16.1 -71 L16.2 -74 L16.2 -77 L16.3 -80 L16.3 -83 L16.4 -86 L16.4 -89 L16.5 -92 L16.5 -95 L16.6 -98 L16.6 -101 L16.7 -104 L16.7 -107 L16.8 -110 L16.9 -113 L-16.9 -113 L-16.8 -110 L-16.7 -107 L-16.7 -104 L-16.6 -101 L-16.6 -98 L-16.5 -95 L-16.5 -92 L-16.4 -89 L-16.4 -86 L-16.3 -83 L-16.3 -80 L-16.2 -77 L-16.2 -74 L-16.1 -71 L-15.2 -68 L-13.8 -65 L-12.5 -62 L-11.1 -59 L-9.8 -56 L-8.4 -53 L-7.1 -50Z" fill="url(#fb)" filter="url(#b2)"/>
<path d="M0 -30 L1.5 -31 L2.4 -34 L3.4 -37 L4.3 -40 L5.2 -43 L6.3 -46 L7.6 -49 L9.0 -52 L10.3 -55 L11.7 -58 L13.0 -61 L14.4 -64 L15.7 -67 L-15.7 -67 L-14.4 -64 L-13.0 -61 L-11.7 -58 L-10.3 -55 L-9.0 -52 L-7.6 -49 L-6.3 -46 L-5.2 -43 L-4.3 -40 L-3.4 -37 L-2.4 -34 L-1.5 -31Z" fill="url(#fb0)" filter="url(#b1)"/>
<path d="M-2.8 -36L-5.2 -150M2.8 -36L5.2 -150" stroke="#000" stroke-opacity=".24" stroke-width="1.5" fill="none" filter="url(#b1)"/>
<path d="M0 20L0 -215" stroke="url(#sg)" stroke-width="2.9" filter="url(#b1)"/>
</g>
</defs>
<g transform="translate(249.2 326.5)">
<use href="#f" transform="rotate(-75)"/>
<use href="#f" transform="rotate(75)"/>
<use href="#f" transform="rotate(-60)"/>
<use href="#f" transform="rotate(60)"/>
<use href="#f" transform="rotate(-45)"/>
<use href="#f" transform="rotate(45)"/>
<use href="#f" transform="rotate(-30)"/>
<use href="#f" transform="rotate(30)"/>
<use href="#f" transform="rotate(-15)"/>
<use href="#f" transform="rotate(15)"/>
<use href="#f" transform="rotate(0)"/>
</g>
</svg>
<div class="a" style="left:249px;top:0;width:1px;height:502px;background:#4affff"></div>
<div class="a" style="left:17px;top:447px;font-size:27px;letter-spacing:1px;line-height:36px;height:36px;white-space:nowrap;color:#f5323a;-webkit-text-stroke:.35px #f5323a;font-family:'Liberation Sans','Noto Serif CJK SC',serif">百度ID：sunnyMelody夏</div></div>
<div class="a" style="left:76px;top:608px;width:535px;height:18px;background:#535353"></div>
<div class="a" style="left:76px;top:608px;width:49px;height:18px;background:#3a3a3a"></div>
<div class="t" style="left:87px;top:610px;letter-spacing:-0.6px">100%</div>
<svg class="a" style="left:127px;top:610px" width="15" height="13" viewBox="0 0 15 13"><path d="M5 2.5H1.5V11.5H11V9" fill="none" stroke="#ddd" stroke-width="1.4"/><path d="M4.5 9 C5 5.5 7 4.5 9.5 4.5 V2 L14 5.8 L9.5 9.5 V7 C7.5 7 6 7.3 4.5 9Z" fill="#ddd"/></svg>
<div class="t" style="left:180px;top:610px;letter-spacing:-0.25px">文档:732.4K/6.24M</div>
<div class="a" style="left:318px;top:612px;border:4.5px solid transparent;border-left:7px solid #f0f0f0;border-right:0"></div>
<div class="a" style="left:328px;top:608px;width:266px;height:18px;background:linear-gradient(#3a3a3a,#494949)"></div>
<div class="a" style="left:594px;top:608px;width:17px;height:18px;background:#505050"></div>
<svg class="a" style="left:597px;top:611px" width="11" height="11" viewBox="0 0 11 11"><g fill="#222"><rect x="9" y="1" width="1" height="1"/><rect x="7" y="3" width="1" height="1"/><rect x="9" y="3" width="1" height="1"/><rect x="5" y="5" width="1" height="1"/><rect x="7" y="5" width="1" height="1"/><rect x="9" y="5" width="1" height="1"/><rect x="3" y="7" width="1" height="1"/><rect x="5" y="7" width="1" height="1"/><rect x="7" y="7" width="1" height="1"/><rect x="9" y="7" width="1" height="1"/><rect x="1" y="9" width="1" height="1"/><rect x="3" y="9" width="1" height="1"/><rect x="5" y="9" width="1" height="1"/><rect x="7" y="9" width="1" height="1"/><rect x="9" y="9" width="1" height="1"/></g></svg>
<div class="a" style="left:617px;top:64px;width:240px;height:565px;background:#535353"></div>
<div class="a" style="left:617px;top:64px;width:240px;height:14px;background:#363636;border-radius:3px 3px 0 0"></div>
<svg class="a" style="left:829px;top:69px" width="8" height="5" viewBox="0 0 8 5"><path d="M3.5 0V5L0 2.5ZM7.5 0V5L4 2.5Z" fill="#d8d8d8"/></svg>
<svg class="a" style="left:846px;top:68px" width="8" height="7" viewBox="0 0 8 7"><path d="M1 0.5 L7 6.5 M7 0.5 L1 6.5" stroke="#ddd" stroke-width="1.6"/></svg>
<div class="a" style="left:617px;top:78px;width:240px;height:17px;background:#424242;border-bottom:1px solid #383838"></div>
<div class="a" style="left:617px;top:78px;width:40px;height:17px;background:#535353;border-right:1px solid #383838"></div>
<div class="a" style="left:696px;top:78px;width:1px;height:16px;background:#383838"></div>
<div class="a" style="left:735px;top:78px;width:1px;height:16px;background:#383838"></div>
<div class="t" style="left:625px;top:80px;color:#f2f2f2">图层</div>
<div class="t" style="left:664px;top:80px;color:#a8a8a8">通道</div>
<div class="t" style="left:703px;top:80px;color:#a8a8a8">路径</div>
<svg class="a" style="left:838px;top:82px" width="14" height="9" viewBox="0 0 14 9"><path d="M0 2 H5 L2.5 5Z" fill="#ddd"/><path d="M6 1 H14 M6 3.5 H14 M6 6 H14 M6 8.5H14" stroke="#ddd" stroke-width="1"/></svg>
<div class="dd" style="left:621px;top:99px;width:83px;height:19px"></div>
<svg class="a" style="left:627px;top:102px" width="13" height="13" viewBox="0 0 13 13"><circle cx="7.5" cy="5" r="3.6" fill="none" stroke="#e8e8e8" stroke-width="1.7"/><path d="M5 7.8 L1.2 11.8" stroke="#e8e8e8" stroke-width="2"/></svg>
<div class="t" style="left:643px;top:103px">类型</div>
<svg class="a" style="left:693px;top:104px" width="7" height="11" viewBox="0 0 7 11"><path d="M0.5 4 L3.5 0.5 L6.5 4Z M0.5 7 L3.5 10.5 L6.5 7Z" fill="#e8e8e8"/></svg>
<svg class="a" style="left:717px;top:102px" width="14" height="12" viewBox="0 0 14 12"><rect x=".6" y=".6" width="12.8" height="10.8" fill="none" stroke="#dcdcdc" stroke-width="1.2"/><path d="M2 9.5L5 5.5L7.5 8L9.5 6.5L12 9.5Z" fill="#dcdcdc"/><circle cx="10" cy="3.7" r="1.2" fill="#dcdcdc"/></svg>
<svg class="a" style="left:742px;top:102px" width="13" height="13" viewBox="0 0 13 13"><circle cx="6.5" cy="6.5" r="5.6" fill="#dcdcdc"/><path d="M10.6 2.6A5.6 5.6 0 0 1 2.6 10.6Z" fill="#535353"/><circle cx="6.5" cy="6.5" r="5.6" fill="none" stroke="#dcdcdc" stroke-width="1.2"/></svg>
<div class="t" style="left:767px;top:100px;font-family:'Liberation Serif',serif;font-weight:bold;font-size:14.5px;line-height:18px;height:18px;color:#dcdcdc">T</div>
<svg class="a" style="left:790px;top:102px" width="14" height="13" viewBox="0 0 14 13"><rect x="2" y="2" width="10" height="9" fill="none" stroke="#dcdcdc" stroke-width="1.2"/><g fill="#dcdcdc"><rect x="0" y="0" width="4" height="4"/><rect x="10" y="0" width="4" height="4"/><rect x="0" y="9" width="4" height="4"/><rect x="10" y="9" width="4" height="4"/></g><g fill="#535353"><rect x="1.2" y="1.2" width="1.6" height="1.6"/><rect x="11.2" y="1.2" width="1.6" height="1.6"/><rect x="1.2" y="10.2" width="1.6" height="1.6"/><rect x="11.2" y="10.2" width="1.6" height="1.6"/></g></svg>
<svg class="a" style="left:814px;top:101px" width="13" height="14" viewBox="0 0 13 14"><path d="M4.5 .6H9.5L12.4 3.5V10.5H4.5Z" fill="#6a6a6a" stroke="#dcdcdc" stroke-width="1.1"/><path d="M9 .6V4H12.4" fill="none" stroke="#dcdcdc" stroke-width="1"/><rect x=".5" y="6.5" width="6.5" height="7" fill="#dcdcdc"/></svg>
<div class="a" style="left:842px;top:99px;width:9px;height:18px;border:1px solid #2a2a2a;border-radius:2px;background:linear-gradient(#888 0 45%,#3a3a3a 45%)"></div>
<div class="a" style="left:617px;top:122px;width:240px;height:2px;background:#3e3e3e;border-bottom:1px solid #616161"></div>
<div class="dd" style="left:621px;top:127px;width:111px;height:19px"></div>
<div class="t" style="left:629px;top:131px">正常</div>
<svg class="a" style="left:721px;top:132px" width="7" height="11" viewBox="0 0 7 11"><path d="M0.5 4 L3.5 0.5 L6.5 4Z M0.5 7 L3.5 10.5 L6.5 7Z" fill="#e8e8e8"/></svg>
<div class="t" style="left:741px;top:130px">不透明度:</div>
<div class="a" style="left:797px;top:127px;width:55px;height:19px;border:1px solid #2d2d2d;border-radius:2px;background:#3a3a3a"></div><div class="a" style="left:832px;top:128px;width:19px;height:17px;background:linear-gradient(#6a6a6a,#565656);border-left:1px solid #2d2d2d"></div><div class="a" style="left:838px;top:135px;border:3.5px solid transparent;border-top:4px solid #e8e8e8;border-bottom:0"></div><div class="t" style="left:801px;top:130px;letter-spacing:-0.4px">100%</div>
<div class="a" style="left:617px;top:150px;width:240px;height:2px;background:#3e3e3e;border-bottom:1px solid #616161"></div>
<div class="t" style="left:623px;top:157px">锁定:</div>
<svg class="a" style="left:660px;top:158px" width="12" height="12" viewBox="0 0 12 12"><rect x=".5" y=".5" width="11" height="11" fill="#6a6a6a" stroke="#dcdcdc"/><g fill="#dcdcdc"><rect x="1" y="1" width="3.3" height="3.3"/><rect x="7.6" y="1" width="3.3" height="3.3"/><rect x="4.3" y="4.3" width="3.3" height="3.3"/><rect x="1" y="7.6" width="3.3" height="3.3"/><rect x="7.6" y="7.6" width="3.3" height="3.3"/></g></svg>
<svg class="a" style="left:680px;top:156px" width="17" height="15" viewBox="0 0 17 15"><path d="M15.5 .5L16.5 1.5L8.5 10L6.8 8.5Z" fill="#dcdcdc"/><path d="M6 9L8 10.8C7 14 3 14.5 .5 13.5C3 12.5 3.5 10.5 6 9Z" fill="#dcdcdc"/></svg>
<svg class="a" style="left:704px;top:157px" width="14" height="14" viewBox="0 0 14 14"><path d="M7 1V13M1 7H13" stroke="#dcdcdc" stroke-width="1.3"/><path d="M7 0L9.5 3H4.5ZM7 14L9.5 11H4.5ZM0 7L3 4.5V9.5ZM14 7L11 4.5V9.5Z" fill="#dcdcdc"/></svg>
<svg class="a" style="left:727px;top:157px" width="11" height="13" viewBox="0 0 11 13"><path d="M2.8 6V4A2.7 2.7 0 0 1 8.2 4V6" fill="none" stroke="#dcdcdc" stroke-width="1.5"/><rect x=".8" y="5.8" width="9.4" height="6.8" rx="1" fill="#dcdcdc"/><rect x="4.8" y="8" width="1.4" height="2.6" fill="#535353"/></svg>
<div class="t" style="left:765px;top:158px">填充:</div>
<div class="a" style="left:797px;top:155px;width:55px;height:19px;border:1px solid #2d2d2d;border-radius:2px;background:#3a3a3a"></div><div class="a" style="left:832px;top:156px;width:19px;height:17px;background:linear-gradient(#6a6a6a,#565656);border-left:1px solid #2d2d2d"></div><div class="a" style="left:838px;top:163px;border:3.5px solid transparent;border-top:4px solid #e8e8e8;border-bottom:0"></div><div class="t" style="left:801px;top:158px;letter-spacing:-0.4px">100%</div>
<div class="a" style="left:617px;top:178px;width:240px;height:424px;background:#535353;overflow:hidden"></div>
<div class="row" style="top:181px;height:39px;overflow:hidden;background:#6b7b94;"><div class="ey" style="background:#535353"><svg style="position:absolute;left:9px;top:13px" width="13" height="10" viewBox="0 0 15 11" preserveAspectRatio="none"><path d="M0.5 5.5 C3 1 12 1 14.5 5.5 C12 10 3 10 0.5 5.5Z" fill="#d6d6d6"/><circle cx="7.5" cy="5.3" r="2.9" fill="#444"/><circle cx="7.5" cy="5.3" r="1.3" fill="#d6d6d6"/></svg></div><div style="position:absolute;left:31px;top:-1px;width:38px;height:38px;background:linear-gradient(90deg,#fff 0 7px,transparent 7px 31px,#fff 31px) top/100% 1px no-repeat,linear-gradient(90deg,#fff 0 7px,transparent 7px 31px,#fff 31px) bottom/100% 1px no-repeat,linear-gradient(#fff 0 7px,transparent 7px 31px,#fff 31px) left/1px 100% no-repeat,linear-gradient(#fff 0 7px,transparent 7px 31px,#fff 31px) right/1px 100% no-repeat"></div><div class="th chk"></div><div class="nm">图层 2</div></div><div class="row" style="top:220px;height:39px;overflow:hidden;"><div class="ey" style="background:#535353"><svg style="position:absolute;left:9px;top:13px" width="13" height="10" viewBox="0 0 15 11" preserveAspectRatio="none"><path d="M0.5 5.5 C3 1 12 1 14.5 5.5 C12 10 3 10 0.5 5.5Z" fill="#d6d6d6"/><circle cx="7.5" cy="5.3" r="2.9" fill="#444"/><circle cx="7.5" cy="5.3" r="1.3" fill="#d6d6d6"/></svg></div><div class="th chk"></div><div class="nm">图层 1 拷贝 10</div></div><div class="row" style="top:259px;height:39px;overflow:hidden;"><div class="ey" style="background:#535353"><svg style="position:absolute;left:9px;top:13px" width="13" height="10" viewBox="0 0 15 11" preserveAspectRatio="none"><path d="M0.5 5.5 C3 1 12 1 14.5 5.5 C12 10 3 10 0.5 5.5Z" fill="#d6d6d6"/><circle cx="7.5" cy="5.3" r="2.9" fill="#444"/><circle cx="7.5" cy="5.3" r="1.3" fill="#d6d6d6"/></svg></div><div class="th chk"></div><div class="nm">图层 1 拷贝 9</div></div><div class="row" style="top:298px;height:39px;overflow:hidden;"><div class="ey" style="background:#535353"><svg style="position:absolute;left:9px;top:13px" width="13" height="10" viewBox="0 0 15 11" preserveAspectRatio="none"><path d="M0.5 5.5 C3 1 12 1 14.5 5.5 C12 10 3 10 0.5 5.5Z" fill="#d6d6d6"/><circle cx="7.5" cy="5.3" r="2.9" fill="#444"/><circle cx="7.5" cy="5.3" r="1.3" fill="#d6d6d6"/></svg></div><div class="th chk"></div><div class="nm">图层 1 拷贝 8</div></div><div class="row" style="top:337px;height:39px;overflow:hidden;"><div class="ey" style="background:#535353"><svg style="position:absolute;left:9px;top:13px" width="13" height="10" viewBox="0 0 15 11" preserveAspectRatio="none"><path d="M0.5 5.5 C3 1 12 1 14.5 5.5 C12 10 3 10 0.5 5.5Z" fill="#d6d6d6"/><circle cx="7.5" cy="5.3" r="2.9" fill="#444"/><circle cx="7.5" cy="5.3" r="1.3" fill="#d6d6d6"/></svg></div><div class="th chk"></div><div class="nm">图层 1 拷贝 7</div></div><div class="row" style="top:376px;height:39px;overflow:hidden;"><div class="ey" style="background:#535353"><svg style="position:absolute;left:9px;top:13px" width="13" height="10" viewBox="0 0 15 11" preserveAspectRatio="none"><path d="M0.5 5.5 C3 1 12 1 14.5 5.5 C12 10 3 10 0.5 5.5Z" fill="#d6d6d6"/><circle cx="7.5" cy="5.3" r="2.9" fill="#444"/><circle cx="7.5" cy="5.3" r="1.3" fill="#d6d6d6"/></svg></div><div class="th chk"></div><div class="nm">图层 1 拷贝 6</div></div><div class="row" style="top:415px;height:39px;overflow:hidden;"><div class="ey" style="background:#535353"><svg style="position:absolute;left:9px;top:13px" width="13" height="10" viewBox="0 0 15 11" preserveAspectRatio="none"><path d="M0.5 5.5 C3 1 12 1 14.5 5.5 C12 10 3 10 0.5 5.5Z" fill="#d6d6d6"/><circle cx="7.5" cy="5.3" r="2.9" fill="#444"/><circle cx="7.5" cy="5.3" r="1.3" fill="#d6d6d6"/></svg></div><div class="th chk"></div><div class="nm">图层 1 拷贝 5</div></div><div class="row" style="top:454px;height:39px;overflow:hidden;"><div class="ey" style="background:#535353"><svg style="position:absolute;left:9px;top:13px" width="13" height="10" viewBox="0 0 15 11" preserveAspectRatio="none"><path d="M0.5 5.5 C3 1 12 1 14.5 5.5 C12 10 3 10 0.5 5.5Z" fill="#d6d6d6"/><circle cx="7.5" cy="5.3" r="2.9" fill="#444"/><circle cx="7.5" cy="5.3" r="1.3" fill="#d6d6d6"/></svg></div><div class="th chk"></div><div class="nm">图层 1 拷贝 4</div></div><div class="row" style="top:493px;height:39px;overflow:hidden;"><div class="ey" style="background:#535353"><svg style="position:absolute;left:9px;top:13px" width="13" height="10" viewBox="0 0 15 11" preserveAspectRatio="none"><path d="M0.5 5.5 C3 1 12 1 14.5 5.5 C12 10 3 10 0.5 5.5Z" fill="#d6d6d6"/><circle cx="7.5" cy="5.3" r="2.9" fill="#444"/><circle cx="7.5" cy="5.3" r="1.3" fill="#d6d6d6"/></svg></div><div class="th chk"></div><div class="nm">图层 1 拷贝 3</div></div><div class="row" style="top:532px;height:39px;overflow:hidden;"><div class="ey" style="background:#535353"><svg style="position:absolute;left:9px;top:13px" width="13" height="10" viewBox="0 0 15 11" preserveAspectRatio="none"><path d="M0.5 5.5 C3 1 12 1 14.5 5.5 C12 10 3 10 0.5 5.5Z" fill="#d6d6d6"/><circle cx="7.5" cy="5.3" r="2.9" fill="#444"/><circle cx="7.5" cy="5.3" r="1.3" fill="#d6d6d6"/></svg></div><div class="th chk"></div><div class="nm">图层 1 拷贝 2</div></div><div class="row" style="top:571px;height:31px;overflow:hidden;"><div class="ey" style="background:#535353"><svg style="position:absolute;left:9px;top:13px" width="13" height="10" viewBox="0 0 15 11" preserveAspectRatio="none"><path d="M0.5 5.5 C3 1 12 1 14.5 5.5 C12 10 3 10 0.5 5.5Z" fill="#d6d6d6"/><circle cx="7.5" cy="5.3" r="2.9" fill="#444"/><circle cx="7.5" cy="5.3" r="1.3" fill="#d6d6d6"/></svg></div><div class="th chk"></div><div class="nm">图层 1 拷贝</div></div>
<div class="a" style="left:843px;top:181px;width:14px;height:421px;background:#3c3c3c"></div>
<div class="a" style="left:845px;top:200px;width:10px;height:317px;border-radius:4px;background:linear-gradient(90deg,#6e6e6e,#8a8a8a)"></div>
<div class="a" style="left:847px;top:187px;border:2.5px solid transparent;border-bottom:4px solid #f0f0f0;border-top:0"></div>
<div class="a" style="left:847px;top:593px;border:2.5px solid transparent;border-top:4px solid #f0f0f0;border-bottom:0"></div>
<div class="a" style="left:617px;top:602px;width:240px;height:20px;background:#535353;border-top:1px solid #3a3a3a"></div>
<svg class="a" style="left:653px;top:608px" width="15" height="9" viewBox="0 0 15 9"><rect x=".8" y="1.3" width="7" height="6" rx="3" fill="none" stroke="#cfcfcf" stroke-width="1.5"/><rect x="7.2" y="1.3" width="7" height="6" rx="3" fill="none" stroke="#cfcfcf" stroke-width="1.5"/></svg>
<div class="t" style="left:682px;top:604px;font-family:'Liberation Serif',serif;font-style:italic;font-size:14px;color:#cfcfcf;line-height:16px;height:16px">fx</div>
<div class="a" style="left:695px;top:616px;border:2px solid transparent;border-top:3px solid #cfcfcf;border-bottom:0"></div>
<svg class="a" style="left:709px;top:606px" width="14" height="12" viewBox="0 0 14 12"><rect x="0" y="0" width="14" height="12" fill="#cfcfcf"/><circle cx="7" cy="6" r="3" fill="#535353"/></svg>
<svg class="a" style="left:737px;top:606px" width="13" height="13" viewBox="0 0 13 13"><circle cx="6.5" cy="6.5" r="5.3" fill="none" stroke="#cfcfcf" stroke-width="1.5"/><path d="M10.3 2.7A5.3 5.3 0 0 1 2.7 10.3Z" fill="#cfcfcf"/></svg>
<div class="a" style="left:751px;top:616px;border:2px solid transparent;border-top:3px solid #cfcfcf;border-bottom:0"></div>
<svg class="a" style="left:763px;top:606px" width="13" height="11" viewBox="0 0 13 11"><path d="M0 2.5H5V0.5H12.5V2.5H13V11H0Z" fill="#cfcfcf"/></svg>
<svg class="a" style="left:790px;top:606px" width="12" height="12" viewBox="0 0 12 12"><path d="M3 0H12V12H7V5H3Z" fill="#cfcfcf"/><path d="M0.5 5.5H6V11.5Z" fill="none" stroke="#cfcfcf"/></svg>
<svg class="a" style="left:818px;top:605px" width="12" height="14" viewBox="0 0 12 14"><path d="M4 1.5H8M.5 3.5H11.5" stroke="#cfcfcf" stroke-width="1.6"/><path d="M1.5 5H10.5L9.5 13.5H2.5Z" fill="#cfcfcf"/><path d="M4 6.5V12M6 6.5V12M8 6.5V12" stroke="#535353" stroke-width=".9"/></svg>
<svg class="a" style="left:846px;top:611px" width="9" height="9" viewBox="0 0 9 9"><g fill="#2e2e2e"><rect x="6" y="0" width="1.5" height="1.5"/><rect x="4" y="2" width="1.5" height="1.5"/><rect x="6" y="2" width="1.5" height="1.5"/><rect x="2" y="4" width="1.5" height="1.5"/><rect x="4" y="4" width="1.5" height="1.5"/><rect x="6" y="4" width="1.5" height="1.5"/><rect x="0" y="6" width="1.5" height="1.5"/><rect x="2" y="6" width="1.5" height="1.5"/><rect x="4" y="6" width="1.5" height="1.5"/><rect x="6" y="6" width="1.5" height="1.5"/></g></svg>
<div class="a" style="left:617px;top:622px;width:240px;height:7px;background:#4c4c4c;border-top:1px solid #383838"></div>
<div class="a" style="left:727px;top:624px;width:20px;height:3px;background:repeating-linear-gradient(90deg,#2e2e2e 0 1px,transparent 1px 2px)"></div>
<div class="a" style="left:658px;top:552px;z-index:60;opacity:.62;color:#fff;white-space:nowrap;height:46px;width:200px"><span style="position:absolute;left:0;top:0;font-size:39px;line-height:46px;font-weight:bold;letter-spacing:-0.6px;font-family:'Liberation Sans',sans-serif">Bai</span><svg style="position:absolute;left:57px;top:-10px" width="41" height="47" viewBox="0 0 46 50"><g fill="#fff"><ellipse cx="7" cy="22" rx="5.5" ry="7.5" transform="rotate(-15 7 22)"/><ellipse cx="17" cy="9" rx="5.5" ry="8"/><ellipse cx="31" cy="9" rx="5.5" ry="8"/><ellipse cx="41" cy="22" rx="5.5" ry="7.5" transform="rotate(15 41 22)"/><path d="M24 20C31 20 35 28 39 33C43 38 41 47 34 47C30 47 28 46 24 46C20 46 18 47 14 47C7 47 5 38 9 33C13 28 17 20 24 20Z"/></g></svg><span style="position:absolute;left:67px;top:13px;font-size:18px;line-height:22px;font-weight:bold;color:#535353;font-family:'Liberation Sans',sans-serif">du</span><span style="position:absolute;left:101px;top:4px;font-size:25.5px;line-height:40px;font-weight:900;font-family:'Noto Sans CJK SC',sans-serif">经验</span></div>
<div class="a" style="left:661px;top:589px;z-index:60;opacity:.62;color:#fff;font-size:18.8px;line-height:26px;white-space:nowrap;font-family:'Liberation Sans',sans-serif">jingyan.baidu.com</div>
<div class="a" style="left:12px;top:52px;width:243px;height:132px;background:#5f5f5f;border:1px solid #6c6c6c;border-right-color:#585858;border-bottom-color:#585858;box-shadow:0 0 0 1px #2a2a2a,2px 3px 4px rgba(0,0,0,.45);z-index:20"></div>
<div class="a" style="left:24px;top:63px;width:188px;height:109px;background:#404040;border:1px solid #333;z-index:21"></div>
<div class="a" style="left:196px;top:64px;width:15px;height:107px;background:linear-gradient(90deg,#3a3a3a,#4a4a4a);z-index:22"></div>
<div class="sw" style="left:25px;top:65px;width:31px;height:31px;z-index:23"><i style="background:linear-gradient(to bottom right,#000 30%,#fff 74%)"></i></div>
<div class="sw" style="left:57px;top:65px;width:31px;height:31px;z-index:23"><i class="chk"></i><i style="background:linear-gradient(to bottom right,#000 12%,rgba(0,0,0,.45) 32%,rgba(0,0,0,0) 58%)"></i></div>
<div class="sw" style="left:89px;top:65px;width:31px;height:31px;z-index:23"><i style="background:linear-gradient(to bottom right,#000 30%,#fff 74%)"></i></div>
<div class="sw" style="left:121px;top:65px;width:31px;height:31px;z-index:23"><i style="background:linear-gradient(to bottom right,#e5101f 32%,#0a6a18 72%)"></i></div>
<div class="sw" style="left:153px;top:65px;width:31px;height:31px;z-index:23"><i style="background:linear-gradient(to bottom right,#2a0a6e 20%,#f07a0a 80%)"></i></div>
<div class="sw" style="left:185px;top:65px;width:10px;height:31px;z-index:23"><i style="background:linear-gradient(160deg,#0a0ab4 40%,#f01414 80%,#ff7a00 100%)"></i></div>
<div class="sw" style="left:25px;top:97px;width:31px;height:31px;z-index:23"><i style="background:linear-gradient(to bottom right,#0a0ab4 26%,#fff614 46%,#fff614 56%,#0a0ab4 78%)"></i></div>
<div class="sw" style="left:57px;top:97px;width:31px;height:31px;z-index:23"><i style="background:linear-gradient(to bottom right,#ff6e02 20%,#fff000 55%,#ff6e02 85%)"></i></div>
<div class="sw" style="left:89px;top:97px;width:31px;height:31px;z-index:23"><i style="background:linear-gradient(to bottom right,#6f156c 22%,#00601b 52%,#fd7c00 82%)"></i></div>
<div class="sw" style="left:121px;top:97px;width:31px;height:31px;z-index:23"><i style="background:linear-gradient(to bottom right,#f9e600 25%,#6f156c 45%,#fd7c00 60%,#002874 78%)"></i></div>
<div class="sw" style="left:153px;top:97px;width:31px;height:31px;z-index:23"><i style="background:linear-gradient(to bottom right,#97461a 24%,#fde0cf 46%,#fbd8c5 50%,#6c2e16 68%,#efdbcd 88%)"></i></div>
<div class="sw" style="left:185px;top:97px;width:10px;height:31px;z-index:23"><i style="background:linear-gradient(165deg,#2989cc 35%,#fff 62%,#906a00 66%,#d99f00 80%,#fff 100%)"></i></div>
<div class="sw" style="left:25px;top:129px;width:31px;height:31px;z-index:23"><i style="background:linear-gradient(to bottom right,#f00 20%,#f0f 32%,#00f 43%,#0ff 54%,#0f0 65%,#ff0 76%,#f00 87%)"></i></div>
<div class="sw" style="left:57px;top:129px;width:31px;height:31px;z-index:23"><i class="chk"></i><i style="background:linear-gradient(to bottom right,rgba(255,0,0,0) 24%,#f00 33%,#ff0 42%,#0f0 50%,#0ff 58%,#00f 66%,#f0f 74%,rgba(255,0,255,0) 82%)"></i></div>
<div class="sw" style="left:89px;top:129px;width:31px;height:31px;z-index:23"><i class="chk"></i><i style="background:repeating-linear-gradient(135deg,#000 0 3.1px,#fff 3.1px 6.2px);-webkit-mask-image:linear-gradient(135deg,#000 62%,transparent 95%)"></i><i style="background:linear-gradient(135deg,#000 30%,transparent 30%)"></i></div>
<div class="sw" style="left:121px;top:129px;width:31px;height:31px;z-index:23"><i class="chk"></i><i style="background:linear-gradient(to bottom right,rgba(90,90,90,.9) 0%,rgba(120,120,120,.5) 40%,rgba(255,255,255,0) 80%)"></i></div>
<svg class="a" style="left:223px;top:68px;z-index:23" width="16" height="12.5" viewBox="0 0 18 14"><g fill="#e6e6e6"><circle cx="6.5" cy="7" r="3.6"/><g stroke="#e6e6e6" stroke-width="2"><path d="M6.5 1V13M0.5 7H12.5M2.3 2.8L10.7 11.2M10.7 2.8L2.3 11.2"/></g></g><circle cx="6.5" cy="7" r="1.7" fill="#5f5f5f"/><path d="M13.5 8.5H17.5L15.5 10.8Z" fill="#e6e6e6"/></svg>
<svg class="a" style="left:244px;top:173px;z-index:23" width="9" height="9" viewBox="0 0 9 9"><g fill="#d0d0d0"><rect x="6" y="0" width="2" height="2"/><rect x="3" y="3" width="2" height="2"/><rect x="6" y="3" width="2" height="2"/><rect x="0" y="6" width="2" height="2"/><rect x="3" y="6" width="2" height="2"/><rect x="6" y="6" width="2" height="2"/></g></svg>
<div class="redbox" style="left:189px;top:16px;width:38px;height:46px"></div>
<div class="redbox" style="left:43px;top:120px;width:60px;height:57px"></div>
<div class="redbox" style="left:18px;top:215px;width:77px;height:36px;border-width:6px"></div>
<div class="redbox" style="left:605px;top:174px;width:255px;height:55px;border-width:7px"></div>
</body></html>
